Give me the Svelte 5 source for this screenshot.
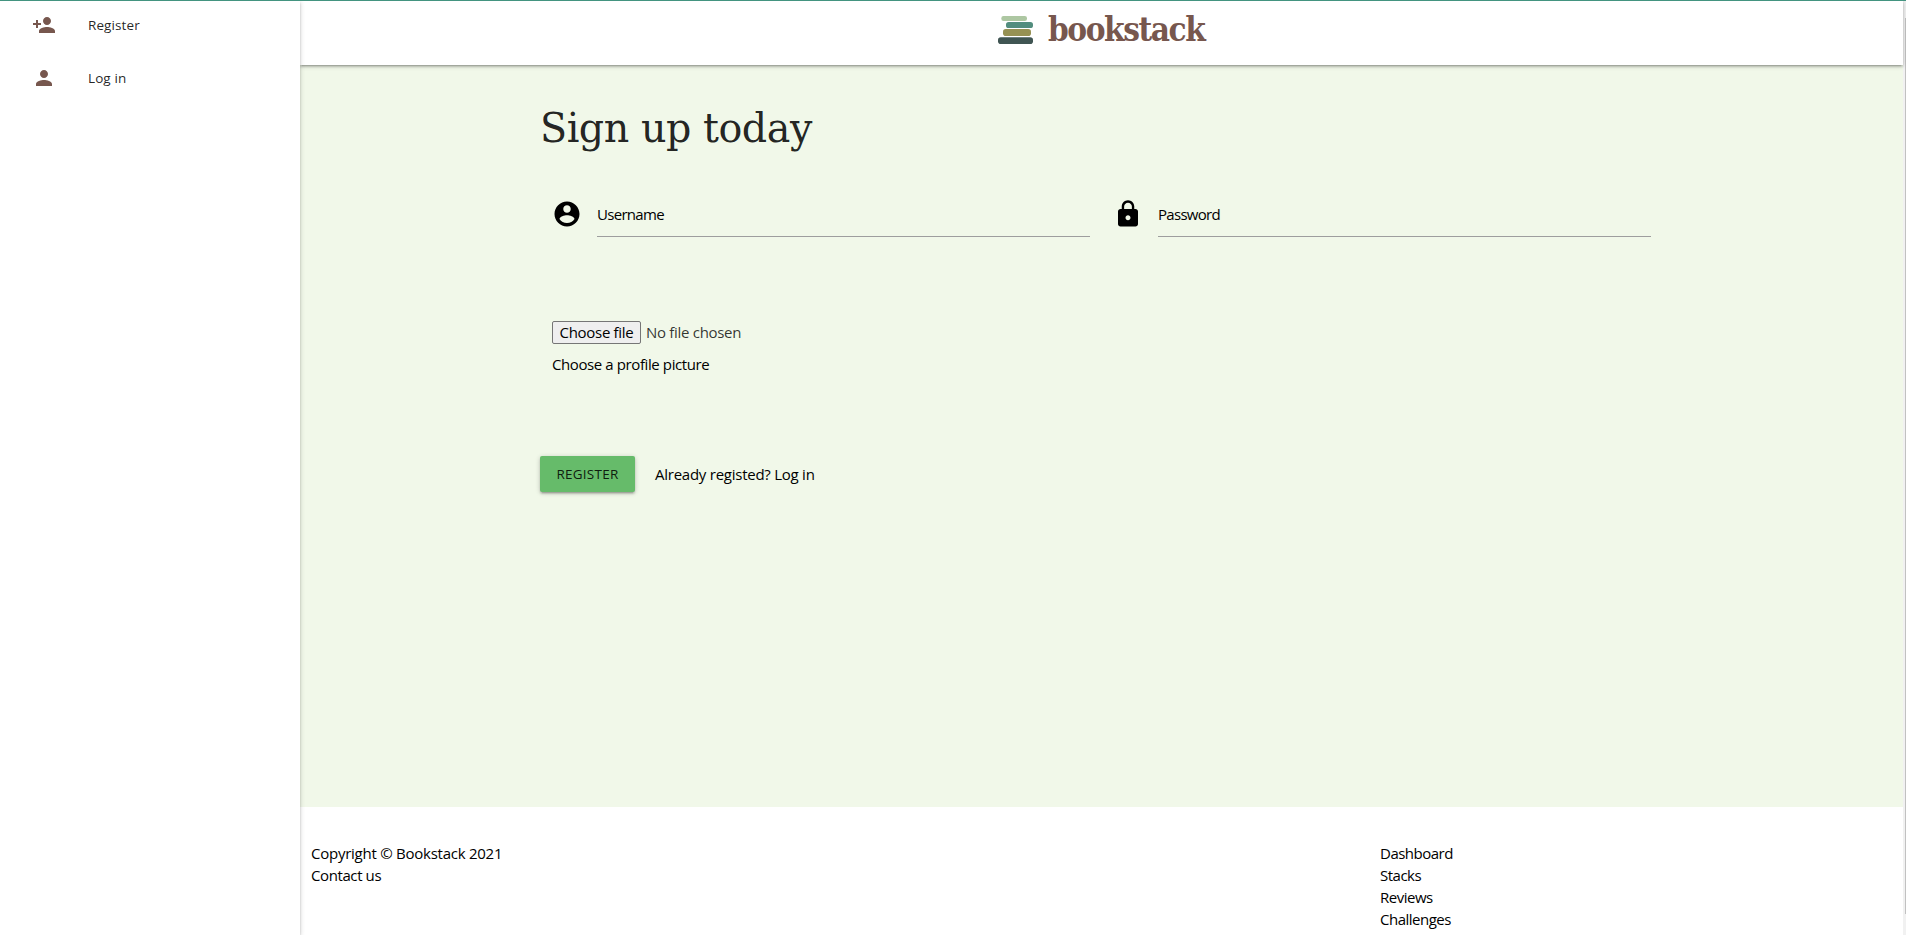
<script>
  const person =
    'M12 12c2.21 0 4-1.79 4-4s-1.79-4-4-4-4 1.79-4 4 1.79 4 4 4zm0 2c-2.67 0-8 1.34-8 4v2h16v-2c0-2.66-5.33-4-8-4z';
  const personAdd =
    'M15 12c2.21 0 4-1.79 4-4s-1.79-4-4-4-4 1.79-4 4 1.79 4 4 4zm-9-2V7H4v3H1v2h3v3h2v-3h3v-2H6zm9 4c-2.67 0-8 1.34-8 4v2h16v-2c0-2.66-5.33-4-8-4z';
  const account =
    'M12 2C6.48 2 2 6.48 2 12s4.48 10 10 10 10-4.48 10-10S17.52 2 12 2zm0 3c1.66 0 3 1.34 3 3s-1.34 3-3 3-3-1.34-3-3 1.34-3 3-3zm0 14.2c-2.5 0-4.71-1.28-6-3.22.03-1.99 4-3.08 6-3.08 1.99 0 5.97 1.09 6 3.08-1.29 1.94-3.5 3.22-6 3.22z';
  const lock =
    'M18 8h-1V6c0-2.76-2.24-5-5-5S7 3.24 7 6v2H6c-1.1 0-2 .9-2 2v10c0 1.1.9 2 2 2h12c1.1 0 2-.9 2-2V10c0-1.1-.9-2-2-2zm-6 9c-1.1 0-2-.9-2-2s.9-2 2-2 2 .9 2 2-.9 2-2 2zm3.1-9H8.9V6c0-1.71 1.39-3.1 3.1-3.1 1.71 0 3.1 1.39 3.1 3.1v2z';

  const nav = [
    { label: 'Register', icon: personAdd },
    { label: 'Log in', icon: person }
  ];
  const fields = [
    { label: 'Username', icon: account },
    { label: 'Password', icon: lock }
  ];
  const links = ['Dashboard', 'Stacks', 'Reviews', 'Challenges'];
</script>

<div class="page">
  <nav class="sidenav">
    {#each nav as item}
      <a href="#top">
        <svg viewBox="0 0 24 24" width="24" height="24"><path d={item.icon} /></svg>
        <span>{item.label}</span>
      </a>
    {/each}
  </nav>

  <div class="content">
    <header>
      <svg class="books" viewBox="0 0 36 30" width="36" height="30">
        <rect x="3.3" y="1" width="25.7" height="5" rx="2.2" fill="#adc7a2" />
        <rect x="8" y="7" width="27" height="6" rx="2.6" fill="#528d7e" />
        <rect x="5" y="14" width="28" height="7" rx="2.8" fill="#969153" />
        <rect x="0" y="22.3" width="35" height="6.7" rx="2.8" fill="#405553" />
      </svg>
      <div class="brand"><span>bookstack</span></div>
    </header>

    <main>
      <form class="container">
        <h1>Sign up today</h1>
        <div class="fields">
          {#each fields as field}
            <div class="field">
              <svg viewBox="0 0 24 24" width="30" height="30"><path d={field.icon} /></svg>
              <div class="input">{field.label}</div>
            </div>
          {/each}
        </div>
        <div class="upload">
          <div class="file">
            <button type="button">Choose file</button>
            <span>No file chosen</span>
          </div>
          <p>Choose a profile picture</p>
        </div>
        <div class="actions">
          <button type="button" class="submit">REGISTER</button>
          <span>Already registed? Log in</span>
        </div>
      </form>
    </main>

    <footer>
      <div class="legal">
        <div class="copy">Copyright © Bookstack 2021</div>
        <div>Contact us</div>
      </div>
      <div class="links">
        {#each links as link}
          <div>{link}</div>
        {/each}
      </div>
    </footer>
  </div>

  <div class="scrollbar"><div class="thumb"></div></div>
</div>

<style>
  :global(body) {
    margin: 0;
    overflow: hidden;
  }
  .page {
    box-sizing: border-box;
    display: flex;
    width: 1906px;
    height: 935px;
    overflow: hidden;
    border-top: 1px solid #439480;
    background: #fff;
    color: #000;
    font: 400 15px/22px 'Open Sans', 'Noto Sans', sans-serif;
    letter-spacing: -0.4px;
  }
  .sidenav {
    display: flex;
    flex-direction: column;
    gap: 5px;
    width: 300px;
    flex: none;
    z-index: 2;
    background: #fff;
    box-shadow: 0 2px 2px 0 rgba(0, 0, 0, 0.14), 0 3px 1px -2px rgba(0, 0, 0, 0.12),
      0 1px 5px 0 rgba(0, 0, 0, 0.2);
  }
  .sidenav a {
    display: flex;
    align-items: center;
    gap: 32px;
    height: 48px;
    padding-left: 32px;
    color: rgba(0, 0, 0, 0.87);
    font-size: 13.5px;
    font-weight: 500;
    letter-spacing: 0.1px;
    text-decoration: none;
  }
  .sidenav svg {
    fill: #77574e;
  }
  .content {
    display: flex;
    flex-direction: column;
    width: 1603px;
    flex: none;
  }
  header {
    box-sizing: border-box;
    display: flex;
    justify-content: center;
    gap: 14px;
    height: 64px;
    flex: none;
    padding-top: 14px;
    z-index: 1;
    background: #fff;
    box-shadow: 0 2px 2px 0 rgba(0, 0, 0, 0.14), 0 3px 1px -2px rgba(0, 0, 0, 0.12),
      0 1px 5px 0 rgba(0, 0, 0, 0.2);
  }
  .brand {
    width: 158px;
    color: #77574e;
    font: bold 33px/30px 'DejaVu Serif', serif;
    letter-spacing: -1.6px;
    white-space: nowrap;
  }
  .brand span {
    display: inline-block;
    transform: scaleX(0.9);
    transform-origin: left;
  }
  main {
    height: 742px;
    flex: none;
    background: #f1f8e9;
  }
  .container {
    width: 1122px;
    margin-left: 240px;
  }
  h1 {
    margin: 0;
    padding-top: 33px;
    height: 96px;
    color: rgba(0, 0, 0, 0.87);
    font: 400 41px/60px 'DejaVu Serif', serif;
    letter-spacing: -0.5px;
    transform: scaleX(0.967);
    transform-origin: left;
  }
  .fields {
    display: flex;
  }
  .field {
    box-sizing: border-box;
    display: flex;
    width: 561px;
    padding: 5px 11px 0 12px;
    gap: 15px;
  }
  .input {
    flex: 1;
    height: 37px;
    line-height: 31px;
    letter-spacing: -0.7px;
    border-bottom: 1px solid #9e9e9e;
  }
  .upload {
    padding: 84px 12px 0;
  }
  .file {
    display: flex;
    gap: 5px;
    height: 23px;
    color: rgba(0, 0, 0, 0.8);
  }
  .file button {
    box-sizing: border-box;
    width: 89px;
    padding: 0;
    border: 1px solid #767676;
    border-radius: 2px;
    background: #efefef;
    color: #000;
    font: inherit;
    line-height: 19px;
    letter-spacing: -0.3px;
  }
  .file span {
    letter-spacing: -0.3px;
  }
  .upload p {
    margin: 9px 0 0;
  }
  .actions {
    display: flex;
    align-items: center;
    gap: 20px;
    margin-top: 81px;
    letter-spacing: -0.25px;
  }
  .submit {
    width: 95px;
    height: 36px;
    padding: 0;
    border: 0;
    border-radius: 2px;
    background: #66bb6a;
    color: rgba(0, 0, 0, 0.87);
    font: inherit;
    font-size: 13.5px;
    letter-spacing: 0.25px;
    box-shadow: 0 2px 2px 0 rgba(0, 0, 0, 0.14), 0 3px 1px -2px rgba(0, 0, 0, 0.12),
      0 1px 5px 0 rgba(0, 0, 0, 0.2);
  }
  footer {
    display: flex;
    padding: 35px 11px 0;
  }
  .legal {
    width: 1069px;
  }
  .copy {
    letter-spacing: -0.25px;
  }
  .links {
    letter-spacing: -0.5px;
  }
  .scrollbar {
    display: flex;
    justify-content: flex-end;
    width: 3px;
    flex: none;
    background: #f1f1f1;
  }
  .thumb {
    width: 1px;
    height: 896px;
    margin-top: 17px;
    background: #c1c1c1;
  }
</style>
